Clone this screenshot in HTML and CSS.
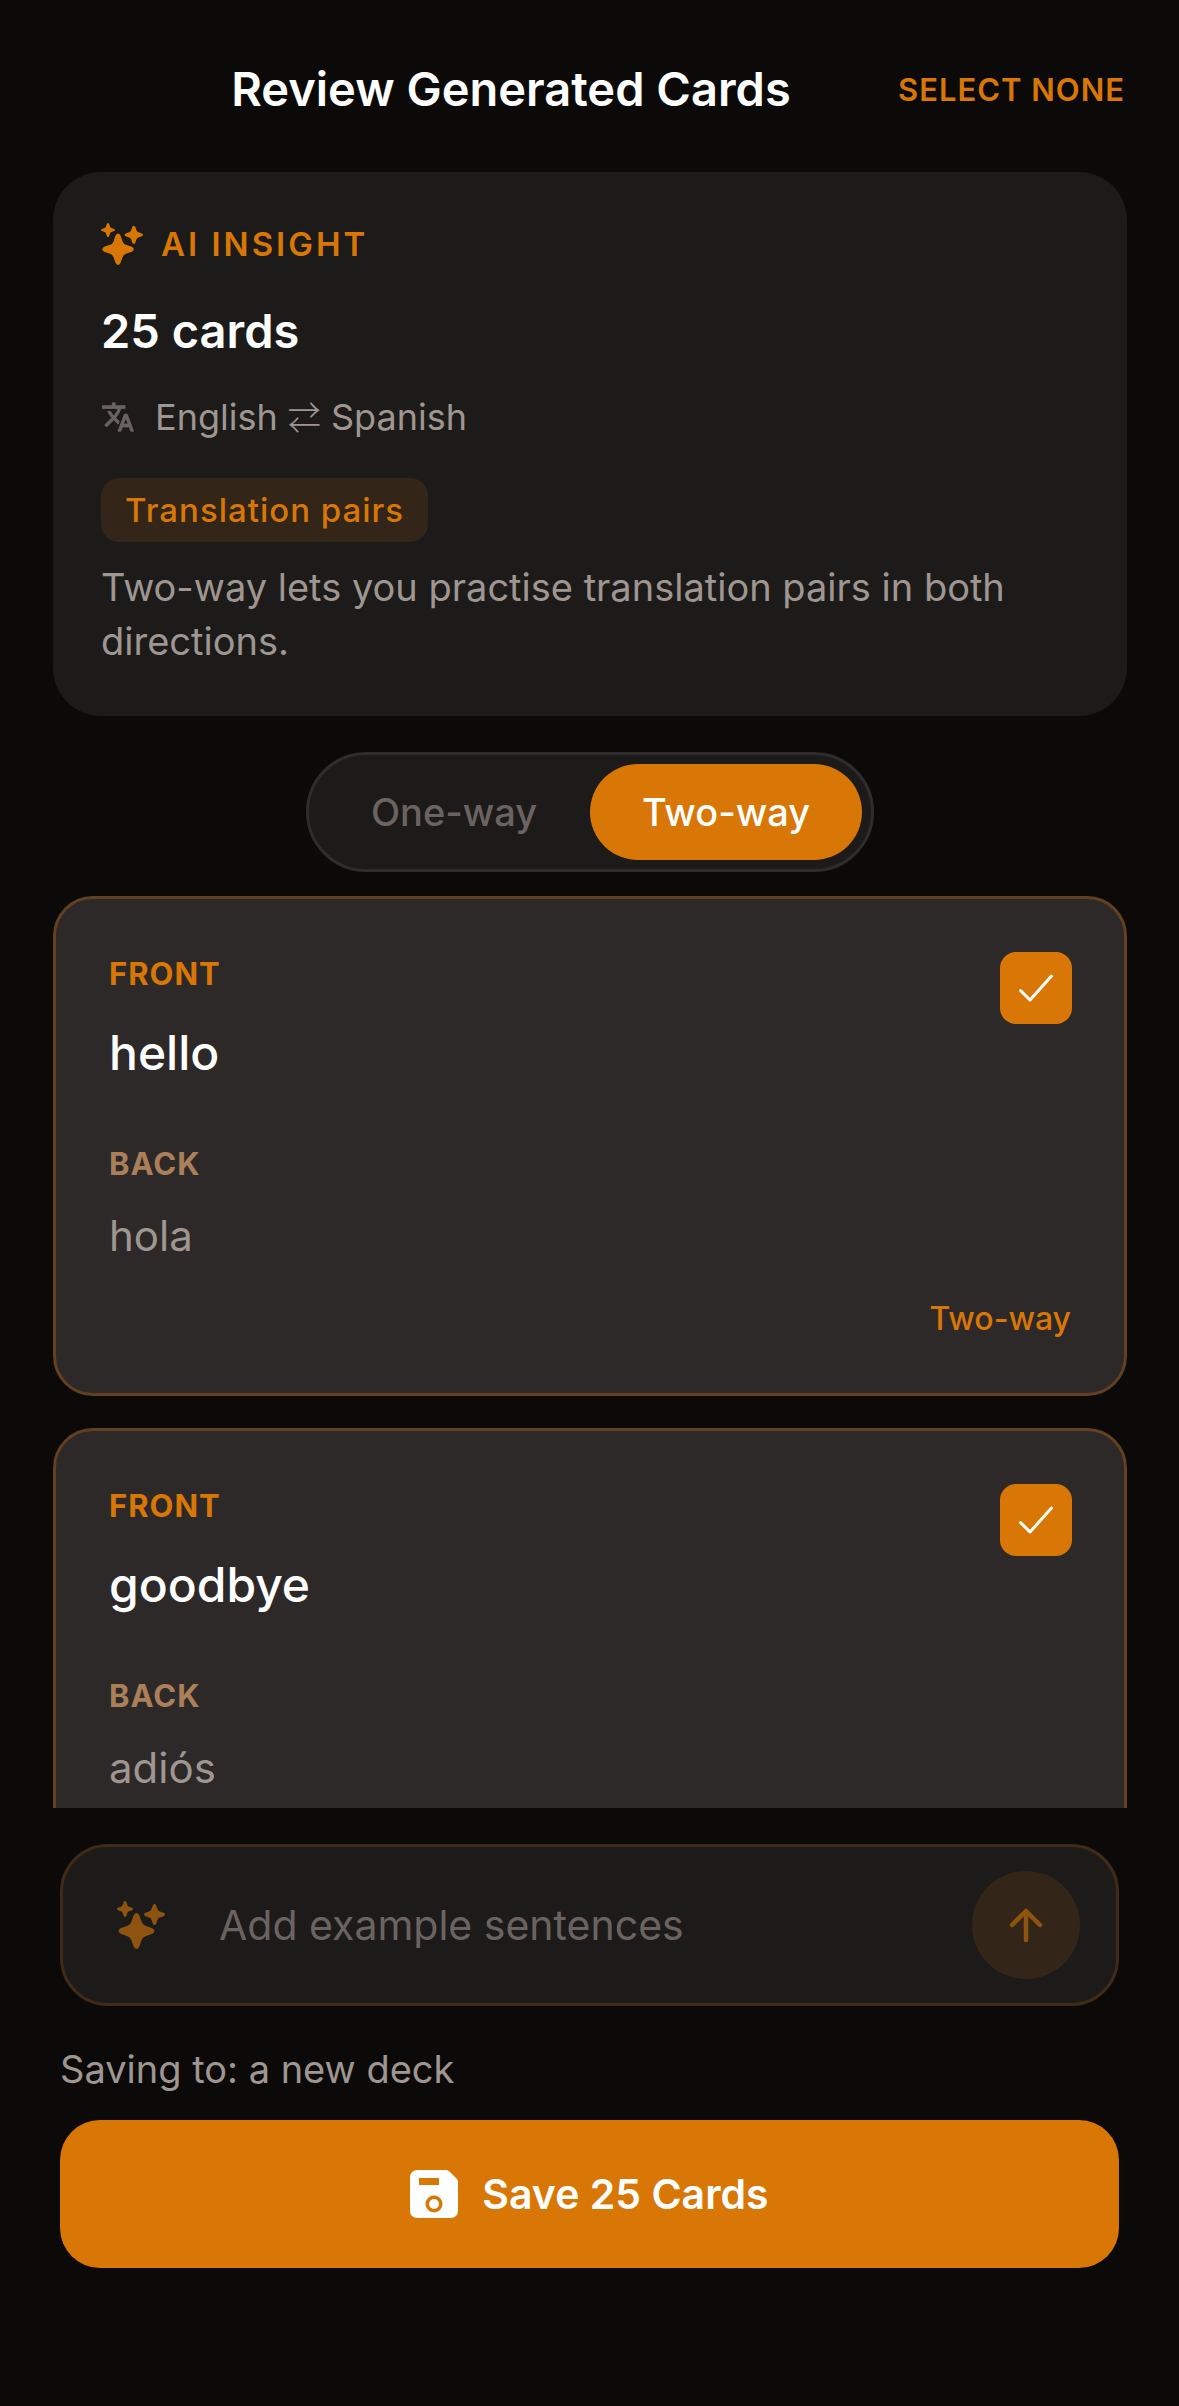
FILE: index.html
```html
<!DOCTYPE html>
<html lang="en">
<head>
<meta charset="utf-8">
<meta name="viewport" content="width=device-width, initial-scale=1">
<title>Review Generated Cards</title>
<link rel="stylesheet" href="styles.css">
</head>
<body>
<svg class="sprite" aria-hidden="true">
  <symbol id="star" viewBox="-18 -18 36 36" overflow="visible">
    <path d="M-2.8-15.8Q0-20.2 2.8-15.8L5.2-9Q6.2-6.2 9-5.2L15.8-2.8Q20.2 0 15.8 2.8L9 5.2Q6.2 6.2 5.2 9L2.8 15.8Q0 20.2-2.8 15.8L-5.2 9Q-6.2 6.2-9 5.2L-15.8 2.8Q-20.2 0-15.8-2.8L-9-5.2Q-6.2-6.2-5.2-9Z"/>
  </symbol>
  <symbol id="sparkles" viewBox="0 0 48 48">
    <use href="#star" x="1.5" y="12" width="36" height="36"/>
    <use href="#star" x="27" y="3" width="21" height="21"/>
    <use href="#star" x="0" y="0" width="16" height="16"/>
  </symbol>
  <symbol id="tick" viewBox="0 0 72 72">
    <path d="M20.500 38.500L30 48L51.500 24" fill="none" stroke="currentColor" stroke-width="3" stroke-linecap="round" stroke-linejoin="round"/>
  </symbol>
</svg>

<header class="topbar">
  <h1 class="title">Review Generated Cards</h1>
  <button class="select-none" type="button">SELECT NONE</button>
</header>

<main class="content">
  <section class="insight">
    <h2 class="insight-label"><svg class="insight-icon"><use href="#sparkles"/></svg>AI INSIGHT</h2>
    <p class="count">25 cards</p>
    <p class="languages">
      <svg class="translate" viewBox="0 1 24 22"><path d="M12.87 15.07l-2.54-2.51.03-.03A17.52 17.52 0 0 0 14.07 6H17V4h-7V2H8v2H1v2h11.17C11.5 7.92 10.44 9.75 9 11.35 8.07 10.32 7.3 9.19 6.69 8h-2c.73 1.63 1.73 3.17 2.98 4.56l-5.09 5.02L4 19l5-5 3.11 3.11.76-2.04zM18.5 10h-2L12 22h2l1.12-3h4.75L21 22h2l-4.5-12zm-2.62 7l1.62-4.33L19.12 17h-3.24z"/></svg>
      <span>English <span class="swap">⇄</span> Spanish</span>
    </p>
    <span class="badge">Translation pairs</span>
    <p class="hint">Two-way lets you practise translation pairs in both directions.</p>
  </section>

  <div class="toggle" role="group" aria-label="Direction">
    <button class="toggle-option" type="button" aria-pressed="false">One-way</button>
    <button class="toggle-option is-active" type="button" aria-pressed="true">Two-way</button>
  </div>

  <div class="cards">
    <article class="card">
      <span class="check"><input class="check-box" type="checkbox" aria-label="Include hello" checked><svg class="check-mark"><use href="#tick"/></svg></span>
      <h3 class="side">FRONT</h3>
      <p class="front">hello</p>
      <h3 class="side side-back">BACK</h3>
      <p class="back">hola</p>
      <p class="direction">Two-way</p>
    </article>
    <article class="card">
      <span class="check"><input class="check-box" type="checkbox" aria-label="Include goodbye" checked><svg class="check-mark"><use href="#tick"/></svg></span>
      <h3 class="side">FRONT</h3>
      <p class="front">goodbye</p>
      <h3 class="side side-back">BACK</h3>
      <p class="back">adiós</p>
    </article>
  </div>
</main>

<footer class="footer">
  <form class="prompt">
    <svg class="prompt-icon"><use href="#sparkles"/></svg>
    <input class="prompt-input" type="text" placeholder="Add example sentences" aria-label="Refine the cards">
    <button class="send" type="button" aria-label="Send">
      <svg class="send-icon" viewBox="0 0 36 36"><path d="M18 33V4M4 18L18 4L32 18" fill="none" stroke="currentColor" stroke-width="4.500" stroke-linecap="round" stroke-linejoin="round"/></svg>
    </button>
  </form>
  <p class="saving">Saving to: a new deck</p>
  <button class="save" type="button">
    <svg class="save-icon" viewBox="0 0 48 48"><path fill-rule="evenodd" d="M8 0H36Q38 0 39.500 1.500L46.500 8.500Q48 10 48 12V40Q48 48 40 48H8Q0 48 0 40V8Q0 0 8 0ZM9 8V15H29V8ZM24 25.500A8.500 8.500 0 1 0 24 42.500A8.500 8.500 0 1 0 24 25.500ZM24 29A5 5 0 1 1 24 39A5 5 0 1 1 24 29Z"/></svg>
    Save 25 Cards
  </button>
</footer>
</body>
</html>
```
FILE: styles.css
```css
* {
  box-sizing: border-box;
}

body {
  margin: 0;
  height: 100vh;
  display: flex;
  flex-direction: column;
  background: #0c0a09;
  color: #fff;
  font-family: Inter, "Liberation Sans", sans-serif;
  font-size: 38px;
}

h1, h2, h3, p {
  margin: 0;
}

svg {
  display: block;
  flex: none;
  fill: currentColor;
}

button, input {
  margin: 0;
  padding: 0;
  border: 0;
  background: none;
  color: inherit;
  font: inherit;
}

.sprite {
  position: absolute;
  width: 0;
  height: 0;
}

.topbar {
  flex: none;
  display: flex;
  align-items: center;
  gap: 24px;
  height: 172px;
  padding: 6px 54px 0 148px;
}

.title {
  flex: 1;
  text-align: center;
  font-size: 47px;
  font-weight: 600;
  line-height: 60px;
}

.select-none {
  color: #d97706;
  font-size: 31px;
  font-weight: 600;
  letter-spacing: 1px;
}

.content {
  flex: 1;
  min-height: 0;
  display: flex;
  flex-direction: column;
  padding: 0 52px 0 53px;
  overflow: hidden;
}

.insight {
  flex: none;
  display: flex;
  flex-direction: column;
  align-items: flex-start;
  padding: 48px;
  border-radius: 48px;
  background: #1c1b19;
}

.insight-label {
  display: flex;
  align-items: center;
  gap: 18px;
  color: #d97706;
  font-size: 33px;
  font-weight: 600;
  line-height: 48px;
  letter-spacing: 3px;
}

.insight-icon {
  width: 42px;
  height: 42px;
}

.count {
  margin-top: 32px;
  font-size: 47px;
  font-weight: 600;
  line-height: 62px;
}

.languages {
  display: flex;
  align-items: center;
  gap: 20px;
  margin-top: 28px;
  color: #9f9691;
  font-size: 36px;
  line-height: 54px;
}

.translate {
  width: 34px;
  height: 32px;
  color: #6b6361;
  stroke: currentColor;
  stroke-width: 0.6px;
  stroke-linejoin: round;
}

.swap {
  font-family: "Noto Sans CJK JP", sans-serif;
  font-size: 33px;
  font-weight: 300;
  line-height: 36px;
}

.badge {
  margin-top: 34px;
  padding: 8px 24px;
  border-radius: 18px;
  background: #332517;
  color: #d97706;
  font-size: 33px;
  font-weight: 500;
  line-height: 48px;
  letter-spacing: 1px;
}

.hint {
  margin-top: 18px;
  color: #9f9691;
  line-height: 54px;
}

.toggle {
  flex: none;
  align-self: center;
  display: flex;
  margin-top: 36px;
  padding: 9px;
  border: 3px solid #2e2d2b;
  border-radius: 60px;
  background: #1c1b19;
}

.toggle-option {
  width: 272px;
  height: 96px;
  border-radius: 48px;
  color: #6b6361;
  font-weight: 500;
}

.toggle-option.is-active {
  background: #d97706;
  color: #fff;
}

.cards {
  display: flex;
  flex-direction: column;
  gap: 32px;
  margin-top: 24px;
}

.card {
  position: relative;
  display: flex;
  flex-direction: column;
  padding: 53px;
  border: 3px solid #63401f;
  border-radius: 40px;
  background: #2d2928;
}

.check {
  position: absolute;
  top: 53px;
  right: 52px;
  display: grid;
}

.check-box,
.check-mark {
  grid-area: 1 / 1;
  width: 72px;
  height: 72px;
}

.check-box {
  appearance: none;
  border-radius: 16px;
  background: #d97706;
}

.check-mark {
  pointer-events: none;
}

.side {
  color: #d97706;
  font-size: 31px;
  font-weight: 700;
  line-height: 44px;
  letter-spacing: 1px;
}

.front {
  margin-top: 24px;
  font-size: 48px;
  font-weight: 500;
  line-height: 66px;
}

.side-back {
  margin-top: 56px;
  color: #ab7f59;
}

.back {
  margin-top: 22px;
  color: #9f9691;
  font-size: 42px;
  line-height: 56px;
}

.direction {
  margin-top: 34px;
  text-align: right;
  color: #d97706;
  font-size: 32px;
  font-weight: 500;
  line-height: 42px;
}

.footer {
  flex: none;
  padding: 36px 60px 138px;
}

.prompt {
  display: flex;
  align-items: center;
  padding: 24px 36px 24px 54px;
  border: 3px solid #422b16;
  border-radius: 48px;
  background: #1c1b19;
}

.prompt-icon {
  width: 48px;
  height: 48px;
  color: #8f5310;
}

.prompt-input {
  flex: 1;
  min-width: 0;
  height: 72px;
  margin: 0 24px 0 54px;
  font-size: 41px;
}

.prompt-input::placeholder {
  color: #6b6361;
  opacity: 1;
}

.send {
  display: grid;
  place-items: center;
  width: 108px;
  height: 108px;
  border-radius: 50%;
  background: #332517;
  color: #8f5310;
}

.send-icon {
  width: 36px;
  height: 36px;
}

.saving {
  margin-top: 36px;
  color: #9f9691;
  line-height: 54px;
}

.save {
  display: flex;
  align-items: center;
  justify-content: center;
  gap: 24px;
  width: 100%;
  height: 148px;
  margin-top: 24px;
  border-radius: 40px;
  background: #d97706;
  font-size: 41px;
  font-weight: 600;
}

.save-icon {
  width: 48px;
  height: 48px;
}
```
